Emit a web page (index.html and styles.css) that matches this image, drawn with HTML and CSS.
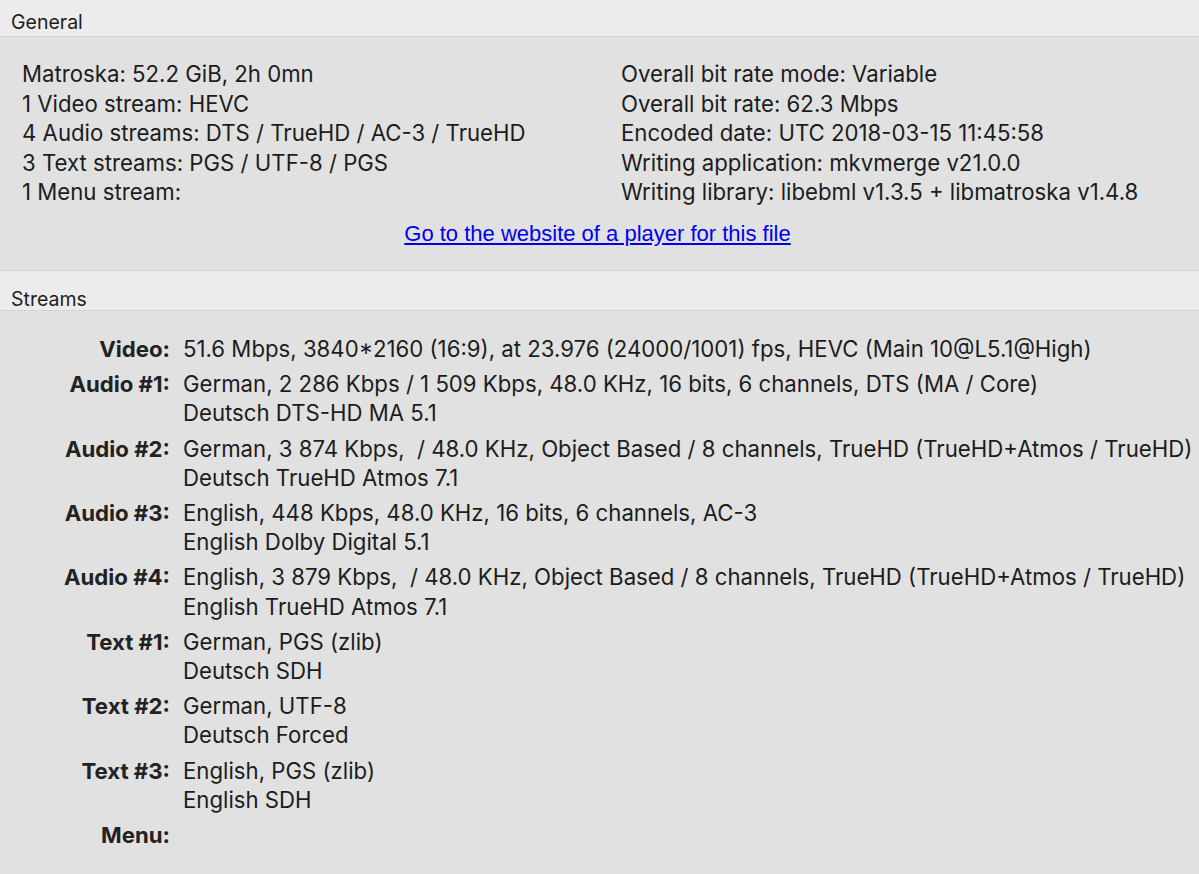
FILE: index.html
```html
<!DOCTYPE html>
<html>
<head>
<meta charset="utf-8">
<link rel="stylesheet" href="styles.css">
</head>
<body>
<section class="general">
  <div class="sec-head sec-head-first">General</div>
  <div class="general-body">
    <div class="cols">
      <div class="col col-left">
        <div class="line">Matroska: 52.2 GiB, 2h 0mn</div>
        <div class="line">1 Video stream: HEVC</div>
        <div class="line">4 Audio streams: DTS / TrueHD / AC-3 / TrueHD</div>
        <div class="line">3 Text streams: PGS / UTF-8 / PGS</div>
        <div class="line">1 Menu stream:</div>
      </div>
      <div class="col col-right">
        <div class="line">Overall bit rate mode: Variable</div>
        <div class="line">Overall bit rate: 62.3 Mbps</div>
        <div class="line">Encoded date: UTC 2018-03-15 11:45:58</div>
        <div class="line">Writing application: mkvmerge v21.0.0</div>
        <div class="line">Writing library: libebml v1.3.5 + libmatroska v1.4.8</div>
      </div>
    </div>
    <div class="link-row"><a class="player-link" href="#">Go to the website of a player for this file</a></div>
  </div>
</section>
<section class="streams">
  <div class="sec-head sec-head-streams">Streams</div>
  <div class="streams-body">
    <div class="label">Video:</div>
    <div class="value"><div class="line">51.6 Mbps, 3840*2160 (16:9), at 23.976 (24000/1001) fps, HEVC (Main 10@L5.1@High)</div></div>
    <div class="label">Audio #1:</div>
    <div class="value"><div class="line">German, 2 286 Kbps / 1 509 Kbps, 48.0 KHz, 16 bits, 6 channels, DTS (MA / Core)</div><div class="line">Deutsch DTS-HD MA 5.1</div></div>
    <div class="label">Audio #2:</div>
    <div class="value"><div class="line">German, 3 874 Kbps,&nbsp; / 48.0 KHz, Object Based / 8 channels, TrueHD (TrueHD+Atmos / TrueHD)</div><div class="line">Deutsch TrueHD Atmos 7.1</div></div>
    <div class="label">Audio #3:</div>
    <div class="value"><div class="line">English, 448 Kbps, 48.0 KHz, 16 bits, 6 channels, AC-3</div><div class="line">English Dolby Digital 5.1</div></div>
    <div class="label">Audio #4:</div>
    <div class="value"><div class="line">English, 3 879 Kbps,&nbsp; / 48.0 KHz, Object Based / 8 channels, TrueHD (TrueHD+Atmos / TrueHD)</div><div class="line">English TrueHD Atmos 7.1</div></div>
    <div class="label">Text #1:</div>
    <div class="value"><div class="line">German, PGS (zlib)</div><div class="line">Deutsch SDH</div></div>
    <div class="label">Text #2:</div>
    <div class="value"><div class="line">German, UTF-8</div><div class="line">Deutsch Forced</div></div>
    <div class="label">Text #3:</div>
    <div class="value"><div class="line">English, PGS (zlib)</div><div class="line">English SDH</div></div>
    <div class="label">Menu:</div>
    <div class="value"></div>
  </div>
</section>
</body>
</html>
```

FILE: styles.css
```css
html, body {
  margin: 0;
  padding: 0;
}
body {
  background: #e1e1e1;
  font-family: Inter, "Noto Sans", sans-serif;
  color: #1c1c1c;
  width: 1199px;
  height: 874px;
  overflow: hidden;
}
.sec-head {
  background: #ececec;
  font-size: 19.5px;
  padding-left: 11px;
  color: #1e1e1e;
  box-sizing: border-box;
}
.sec-head-first {
  height: 37px;
  line-height: 45px;
  border-bottom: 1px solid #d4d4d4;
}
.sec-head-streams {
  height: 41px;
  line-height: 56px;
  border-top: 1px solid #d4d4d4;
  border-bottom: 1px solid #d4d4d4;
}
.general-body {
  padding: 22px 0 20px 0;
  height: 233px;
  box-sizing: border-box;
}
.cols {
  display: flex;
}
.col-left {
  padding-left: 22px;
  width: 621px;
  box-sizing: border-box;
}
.col-right {
  flex: 1;
}
.line {
  font-size: 22.2px;
  line-height: 29.5px;
  white-space: nowrap;
}
.link-row {
  text-align: center;
  margin-top: 14px;
  padding-right: 4px;
}
.player-link {
  font-family: "Liberation Sans", Arial, sans-serif;
  font-size: 22px;
  color: #0000ee;
  text-decoration: underline;
}
.streams-body {
  display: grid;
  grid-template-columns: 170px 1fr;
  column-gap: 13px;
  row-gap: 6px;
  padding-top: 23px;
}
.streams-body .line {
  line-height: 29.2px;
}
.label {
  text-align: right;
  font-weight: 700;
  font-size: 22.2px;
  line-height: 29.2px;
  color: #222;
}
.value {
  min-height: 29.2px;
}
```
